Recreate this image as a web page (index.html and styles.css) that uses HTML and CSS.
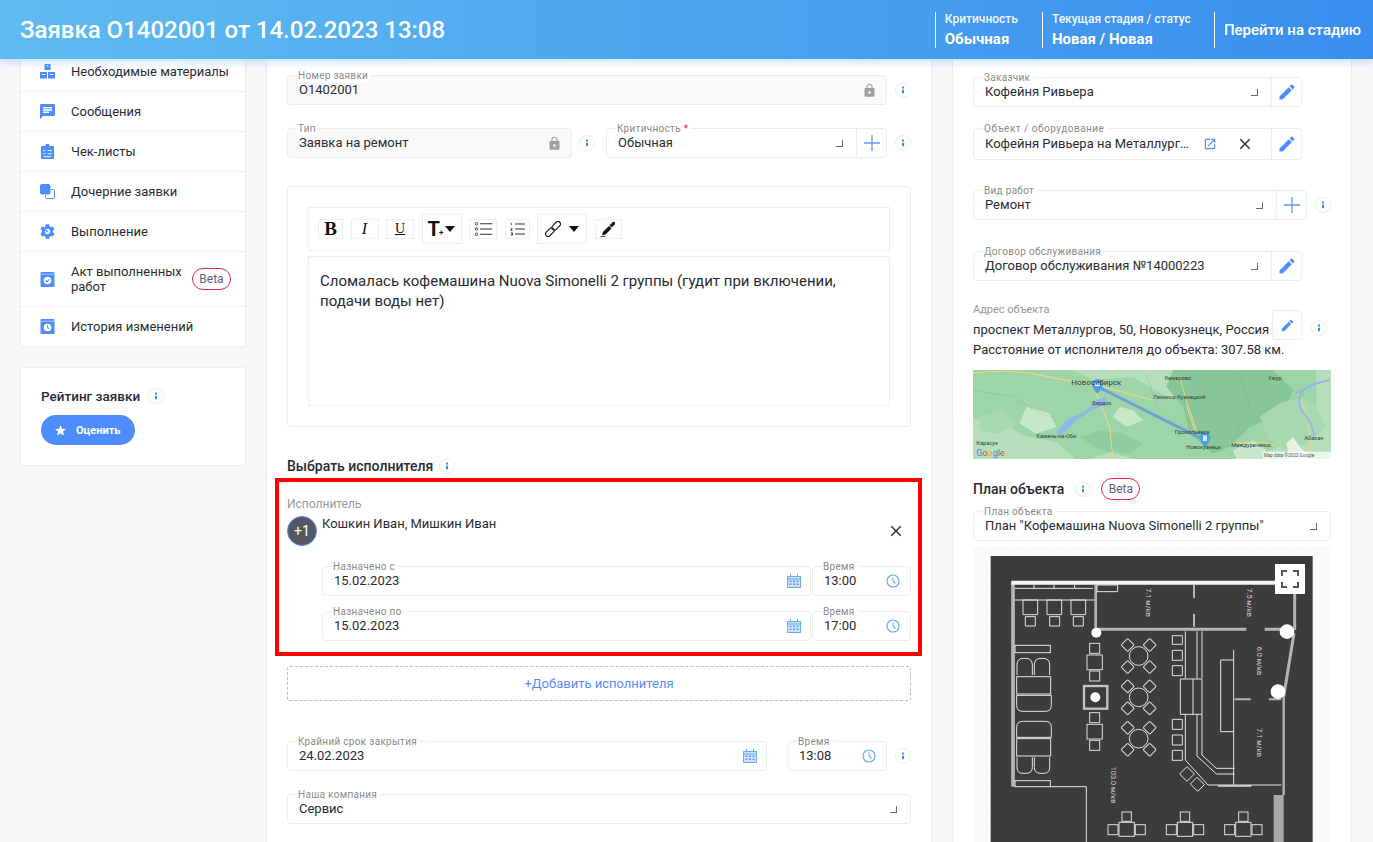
FILE: index.html
```html
<!DOCTYPE html>
<html lang="ru">
<head>
  <meta charset="UTF-8" />
  <title>Заявка О1402001</title>
  <link rel="stylesheet" href="styles.css">
</head>
<body>

  <svg class="sprite" xmlns="http://www.w3.org/2000/svg">
    <symbol id="i-info" viewBox="0 0 16 16"><circle cx="8" cy="8" r="7.5" fill="#fff" stroke="#ececec"/><rect x="7" y="4.6" width="2" height="2" fill="#3e8bf0"/><rect x="7" y="7.8" width="2" height="3.4" fill="#3e8bf0"/></symbol>
    <symbol id="i-lock" viewBox="0 0 24 24"><path d="M18 8h-1V6c0-2.76-2.24-5-5-5S7 3.24 7 6v2H6c-1.1 0-2 .9-2 2v10c0 1.1.9 2 2 2h12c1.1 0 2-.9 2-2V10c0-1.1-.9-2-2-2zm-6 9c-1.1 0-2-.9-2-2s.9-2 2-2 2 .9 2 2-.9 2-2 2zm3.100-9H8.900V6c0-1.710 1.390-3.100 3.100-3.100 1.710 0 3.100 1.390 3.100 3.100v2z"/></symbol>
    <symbol id="i-edit" viewBox="0 0 24 24"><path d="M3 17.250V21h3.750L17.810 9.940l-3.750-3.750L3 17.250zM20.710 7.040c.39-.39.39-1.020 0-1.410l-2.340-2.340c-.39-.39-1.020-.39-1.410 0l-1.830 1.830 3.750 3.750 1.830-1.830z"/></symbol>
    <symbol id="i-close" viewBox="0 0 24 24"><path d="M19 6.410L17.590 5 12 10.590 6.410 5 5 6.410 10.590 12 5 17.590 6.410 19 12 13.410 17.590 19 19 17.590 13.410 12z"/></symbol>
    <symbol id="i-open" viewBox="0 0 24 24"><path d="M19 19H5V5h7V3H5c-1.110 0-2 .9-2 2v14c0 1.100.89 2 2 2h14c1.100 0 2-.9 2-2v-7h-2v7zM14 3v2h3.590l-9.830 9.830 1.410 1.410L19 6.410V10h2V3h-7z"/></symbol>
    <symbol id="i-plus" viewBox="0 0 16 16"><path d="M8 0v16M0 8h16" fill="none" stroke="currentColor" stroke-width="1.300"/></symbol>
    <symbol id="i-cal" viewBox="0 0 14 14"><path d="M0 2h14v12H0z" fill="#cfe2fb" stroke="none"/><path d="M.5 2.500h13v11H.5zM.5 5h13M3.500 0v3M10.500 0v3" fill="none" stroke="#6aa9f5"/><path d="M2.500 6.500h2v1.500h-2zM6 6.500h2v1.500H6zM9.500 6.500h2v1.500h-2zM2.500 9.500h2V11h-2zM6 9.500h2V11H6zM9.500 9.500h2V11h-2z" fill="#5b9bee"/></symbol>
    <symbol id="i-clock" viewBox="0 0 14 14"><circle cx="7" cy="7" r="6" fill="none" stroke="#6aa9f5" stroke-width="1.200"/><path d="M7 3.500V7l2.500 2.500" fill="none" stroke="#6aa9f5" stroke-width="1.100"/></symbol>
    <symbol id="i-boxes" viewBox="0 0 15 15"><path d="M4.500 0h6v6h-6zM0 8h7v6.500H0zM8 8h7v6.500H8z"/><path d="M6.500 2h2M2 10.500h3M10 10.500h3" stroke="#fff"/></symbol>
    <symbol id="i-chat" viewBox="2 2 20 20"><path d="M20 2H4c-1.100 0-2 .9-2 2v18l4-4h14c1.100 0 2-.9 2-2V4c0-1.100-.9-2-2-2zM6 9h12v2H6V9zm8 5H6v-2h8v2zm4-6H6V6h12v2z"/></symbol>
    <symbol id="i-check" viewBox="0 0 14 16"><path d="M1 2h3.500l1-2h3l1 2H13a1 1 0 0 1 1 1v12a1 1 0 0 1-1 1H1a1 1 0 0 1-1-1V3a1 1 0 0 1 1-1z"/><path d="M2.500 6.500l1 1 1.500-1.500M7 7h4.500M2.500 10l1 1 1.500-1.500M7 10.500h4.500M3 13.500h8" fill="none" stroke="#fff"/></symbol>
    <symbol id="i-copy" viewBox="0 0 15 15"><rect width="10.500" height="10.500" rx="2"/><path d="M11.500 5.500h2a1 1 0 0 1 1 1v7a1 1 0 0 1-1 1h-7a1 1 0 0 1-1-1v-2" fill="none" stroke="currentColor"/></symbol>
    <symbol id="i-gear" viewBox="2 2 20 20"><path d="M19.140 12.940c.04-.3.06-.61.06-.94 0-.32-.02-.64-.07-.94l2.030-1.580c.18-.14.23-.41.12-.61l-1.920-3.320c-.12-.22-.37-.29-.59-.22l-2.390.96c-.5-.38-1.030-.7-1.620-.94l-.36-2.540c-.04-.24-.24-.41-.48-.41h-3.840c-.24 0-.43.17-.47.41l-.36 2.540c-.59.24-1.130.57-1.620.94l-2.390-.96c-.22-.08-.47 0-.59.22L2.740 8.870c-.12.21-.08.47.12.61l2.030 1.580c-.05.3-.09.63-.09.94s.02.64.07.94l-2.030 1.580c-.18.14-.23.41-.12.61l1.920 3.320c.12.22.37.29.59.22l2.390-.96c.5.38 1.030.7 1.620.94l.36 2.540c.05.24.24.41.48.41h3.840c.24 0 .44-.17.47-.41l.36-2.540c.59-.24 1.130-.56 1.620-.94l2.390.96c.22.08.47 0 .59-.22l1.920-3.320c.12-.22.07-.47-.12-.61l-2.010-1.580zM12 15.600c-1.980 0-3.600-1.620-3.600-3.600s1.620-3.600 3.600-3.600 3.600 1.620 3.600 3.600-1.620 3.600-3.600 3.600z"/><path d="M9.500 10l2.500 2.500" stroke="currentColor" stroke-width="2"/></symbol>
    <symbol id="i-act" viewBox="0 0 14 15"><path d="M1 0h12a1 1 0 0 1 1 1v13a1 1 0 0 1-1 1H1a1 1 0 0 1-1-1V1a1 1 0 0 1 1-1z"/><path d="M0 2.200h14" stroke="#fff" stroke-width=".5"/><circle cx="7" cy="8.500" r="3.800" fill="#fff"/><path d="M5.200 8.500l1.300 1.300 2.300-2.400" fill="none" stroke="currentColor" stroke-width="1.100"/></symbol>
    <symbol id="i-hist" viewBox="0 0 14 15"><path d="M1 0h12a1 1 0 0 1 1 1v13a1 1 0 0 1-1 1H1a1 1 0 0 1-1-1V1a1 1 0 0 1 1-1z"/><path d="M0 2.200h14" stroke="#fff" stroke-width=".5"/><circle cx="7" cy="8.500" r="3.800" fill="#fff"/><path d="M7 6.200v2.500l1.700 1" fill="none" stroke="currentColor"/></symbol>
    <symbol id="i-star" viewBox="2 2 20 20"><path d="M12 17.270L18.180 21l-1.640-7.030L22 9.240l-7.190-.61L12 2 9.190 8.630 2 9.240l5.460 4.730L5.820 21z"/></symbol>
    <symbol id="i-ul" viewBox="0 0 20 16"><circle cx="2" cy="2" r="1.500" fill="none" stroke="#333"/><circle cx="2" cy="8" r="1.500" fill="none" stroke="#333"/><circle cx="2" cy="14" r="1.500" fill="none" stroke="#333"/><path d="M6 2h14M6 8h14M6 14h14" stroke="#333" stroke-width="1.400"/></symbol>
    <symbol id="i-ol" viewBox="0 0 18 16"><path d="M1.500.5v3M1 7h1.500v1.500H1V10h2M1 12.500h2V14H1.500 3v1.500H1" fill="none" stroke="#333" stroke-width=".9"/><path d="M6 2h12M6 8h12M6 14h12" stroke="#333" stroke-width="1.400"/></symbol>
    <symbol id="i-link" viewBox="0 0 16 16"><g fill="none" stroke="#222" stroke-width="1.200" transform="rotate(-45 8 8)"><rect x="-1.500" y="5.500" width="10" height="5" rx="2.500"/><rect x="7.500" y="5.500" width="10" height="5" rx="2.500"/></g></symbol>
    <symbol id="i-pen" viewBox="0 0 16 16"><path d="M2 14.500L3 11l6-6 2.500 2.500-6 6z"/><path d="M9.500 4.500l2.800-3c.8-.8 1.800-.8 2.400-.2s.6 1.600-.2 2.400l-3 2.800z"/><path d="M.5 15.500h5" stroke="#222" stroke-width=".8"/></symbol>
  </svg>

  <header class="top-bar">
    <h1 class="top-title">Заявка О1402001 от 14.02.2023 13:08</h1>
    <div class="top-info">
      <div class="top-item top-crit">
        <span class="top-label">Критичность</span>
        <span class="top-value">Обычная</span>
      </div>
      <div class="top-item">
        <span class="top-label">Текущая стадия / статус</span>
        <span class="top-value">Новая / Новая</span>
      </div>
      <div class="top-item top-action">Перейти на стадию</div>
    </div>
  </header>

  <main class="page">

    <aside class="sidebar">
      <nav class="card side-nav">
        <a class="nav-row"><svg class="nav-icon"><use href="#i-boxes"/></svg>Необходимые материалы</a>
        <a class="nav-row"><svg class="nav-icon"><use href="#i-chat"/></svg>Сообщения</a>
        <a class="nav-row"><svg class="nav-icon"><use href="#i-check"/></svg>Чек-листы</a>
        <a class="nav-row"><svg class="nav-icon"><use href="#i-copy"/></svg>Дочерние заявки</a>
        <a class="nav-row"><svg class="nav-icon"><use href="#i-gear"/></svg>Выполнение</a>
        <a class="nav-row nav-row-tall"><svg class="nav-icon"><use href="#i-act"/></svg><span class="nav-text">Акт выполненных работ</span><span class="beta">Beta</span></a>
        <a class="nav-row"><svg class="nav-icon"><use href="#i-hist"/></svg>История изменений</a>
      </nav>

      <section class="card rating">
        <div class="heading rating-heading">Рейтинг заявки <svg class="info heading-info"><use href="#i-info"/></svg></div>
        <button class="rate-btn"><svg class="rate-star"><use href="#i-star"/></svg>Оценить</button>
      </section>
    </aside>

    <section class="card center">
      <div class="row">
        <div class="field locked grow">
          <label class="float">Номер заявки</label>
          <span class="value">О1402001</span>
          <svg class="lock"><use href="#i-lock"/></svg>
        </div>
        <svg class="info"><use href="#i-info"/></svg>
      </div>

      <div class="row row-type">
        <div class="field locked type-field">
          <label class="float">Тип</label>
          <span class="value">Заявка на ремонт</span>
          <svg class="lock"><use href="#i-lock"/></svg>
        </div>
        <svg class="info info-type"><use href="#i-info"/></svg>
        <div class="field grow">
          <label class="float">Критичность <em class="req">*</em></label>
          <span class="value">Обычная</span>
          <i class="corner"></i>
          <span class="addon"><svg class="plus"><use href="#i-plus"/></svg></span>
        </div>
        <svg class="info"><use href="#i-info"/></svg>
      </div>

      <div class="editor">
        <div class="toolbar">
          <span class="tool tool-b">B</span>
          <span class="tool tool-i">I</span>
          <span class="tool tool-u">U</span>
          <span class="tool tool-big tool-t">T<small class="t-mark">+</small><i class="caret"></i></span>
          <span class="tool tool-list"><svg class="tool-svg-ul"><use href="#i-ul"/></svg></span>
          <span class="tool tool-olist"><svg class="tool-svg-ol"><use href="#i-ol"/></svg></span>
          <span class="tool tool-big tool-link"><svg class="tool-svg"><use href="#i-link"/></svg><i class="caret caret-wide"></i></span>
          <span class="tool tool-pen"><svg class="tool-svg"><use href="#i-pen"/></svg></span>
        </div>
        <div class="editor-text">Сломалась кофемашина Nuova Simonelli 2 группы (гудит при включении, подачи воды нет)</div>
      </div>

      <div class="heading executor-heading">Выбрать исполнителя <svg class="info executor-info"><use href="#i-info"/></svg></div>

      <div class="executor">
        <div class="plain-label">Исполнитель</div>
        <div class="executor-person">
          <span class="avatar">+1</span>
          <span class="executor-name">Кошкин Иван, Мишкин Иван</span>
          <svg class="close close-exec"><use href="#i-close"/></svg>
        </div>
        <div class="date-row">
          <div class="field grow">
            <label class="float">Назначено с</label>
            <span class="value">15.02.2023</span>
            <svg class="cal"><use href="#i-cal"/></svg>
          </div>
          <div class="field time-field">
            <label class="float">Время</label>
            <span class="value">13:00</span>
            <svg class="clock"><use href="#i-clock"/></svg>
          </div>
        </div>
        <div class="date-row date-row-2">
          <div class="field grow">
            <label class="float">Назначено по</label>
            <span class="value">15.02.2023</span>
            <svg class="cal"><use href="#i-cal"/></svg>
          </div>
          <div class="field time-field">
            <label class="float">Время</label>
            <span class="value">17:00</span>
            <svg class="clock"><use href="#i-clock"/></svg>
          </div>
        </div>
      </div>

      <button class="add-executor">+Добавить исполнителя</button>

      <div class="row row-deadline">
        <div class="field deadline-field">
          <label class="float">Крайний срок закрытия</label>
          <span class="value">24.02.2023</span>
          <svg class="cal"><use href="#i-cal"/></svg>
        </div>
        <div class="field deadline-time">
          <label class="float">Время</label>
          <span class="value">13:08</span>
          <svg class="clock"><use href="#i-clock"/></svg>
        </div>
        <svg class="info"><use href="#i-info"/></svg>
      </div>

      <div class="field company-field">
        <label class="float">Наша компания</label>
        <span class="value">Сервис</span>
        <i class="corner"></i>
      </div>
    </section>

    <section class="card right">
      <div class="field side-field customer">
        <label class="float">Заказчик</label>
        <span class="value">Кофейня Ривьера</span>
        <i class="corner"></i>
        <span class="addon"><svg class="pencil"><use href="#i-edit"/></svg></span>
      </div>

      <div class="field side-field object-field">
        <label class="float">Объект / оборудование</label>
        <span class="value clip">Кофейня Ривьера на Металлург…</span>
        <svg class="open"><use href="#i-open"/></svg>
        <svg class="close close-object"><use href="#i-close"/></svg>
        <span class="addon"><svg class="pencil"><use href="#i-edit"/></svg></span>
      </div>

      <div class="row work-row">
        <div class="field work-field">
          <label class="float">Вид работ</label>
          <span class="value">Ремонт</span>
          <i class="corner"></i>
          <span class="addon"><svg class="plus"><use href="#i-plus"/></svg></span>
        </div>
        <svg class="info info-work"><use href="#i-info"/></svg>
      </div>

      <div class="field side-field contract">
        <label class="float">Договор обслуживания</label>
        <span class="value">Договор обслуживания №14000223</span>
        <i class="corner"></i>
        <span class="addon"><svg class="pencil"><use href="#i-edit"/></svg></span>
      </div>

      <div class="address">
        <div class="address-main">
          <div class="plain-label address-label">Адрес объекта</div>
          <div class="address-text">проспект Металлургов, 50, Новокузнецк, Россия</div>
        </div>
        <span class="pencil-box"><svg class="pencil-small"><use href="#i-edit"/></svg></span>
        <svg class="info info-address"><use href="#i-info"/></svg>
      </div>
      <div class="distance">Расстояние от исполнителя до объекта: 307.58 км.</div>

      <svg class="map" viewBox="40 420 1074 266" preserveAspectRatio="none">
        <rect x="40" y="420" width="1074" height="266" fill="#b4dfba"/>
        <path d="M40 420h300l60 30 120-10 100 60 90 20 110-20 40-80h210v120l-70 40-40 70-120 40-60 46H620l-60-40-110-30-90 30-70-60-100-20-60-40-90-10z" fill="#9dd5a9"/>
        <path d="M640 420h300l60 60-30 70-100 40-60 60-50 20-70-60-20-80-50-60z" fill="#86c699"/>
        <path d="M900 560l60-40 70-20 40 30 30 60-60 50-60 20-50-30zM60 560l70-20 40 40-50 30-60-10z" fill="#a6d9b0"/>
        <path d="M360 620l60-20 70 10 60 30-40 30-90-10z" fill="#8fcda0"/>
        <path d="M200 530l70 20 20 40-60 20-50-30zM820 660l60-30 40 30-20 26h-70zM480 530l40 10 30 30-50 20-40-30z" fill="#c8e8cb"/>
        <path d="M980 640l20-20 20 30 40 36h-70z" fill="#e8f1e4"/>
        <path d="M40 430q100-15 200 5t160 30M410 490l40 100 10 96M660 440l20 70 30 90M680 525l25 75M810 640l100-5 60 20M1015 490l30 70 10 126M430 470l150 40" fill="none" stroke="#f0d684" stroke-width="3"/>
        <path d="M290 610l30-40 60-30 30-30 25-10 10 20-50 20-50 35-40 40z" fill="#8fb7ea"/>
        <path d="M1110 450q-50 10-80 30-20 30-5 60 30 30 40 80M1030 480l-20 10" fill="none" stroke="#8fb7ea" stroke-width="6"/>
        <path d="M40 480l120 20 80 50 40 10M560 430l30 100 40 40 90 40M840 430l30 90-50 110" fill="none" stroke="#7f9a88" stroke-width="1.500" stroke-dasharray="3 3"/>
        <path d="M415 470L735 630" stroke="#6d9fd9" stroke-width="9"/>
        <path d="M413 447a16 16 0 0 1 16 16c0 11-16 27-16 27s-16-16-16-27a16 16 0 0 1 16-16z" fill="#4c9fe8"/>
        <path d="M736 606a16 16 0 0 1 16 16c0 11-16 30-16 30s-16-19-16-30a16 16 0 0 1 16-16z" fill="#4c9fe8"/>
        <rect x="406" y="458" width="14" height="10" fill="#fff"/>
        <rect x="730" y="616" width="12" height="16" fill="#d8ecfb"/>
        <g class="map-labels">
          <text x="335" y="464" class="map-big">Новосибирск</text>
          <text x="615" y="450">Кемерово</text>
          <text x="580" y="506">Ленинск-Кузнецкий</text>
          <text x="398" y="525">Бердск</text>
          <text x="230" y="624">Камень-на-Оби</text>
          <text x="645" y="610">Прокопьевск</text>
          <text x="680" y="656">Новокузнецк</text>
          <text x="815" y="650">Междуреченск</text>
          <text x="925" y="450">Ужур</text>
          <text x="1034" y="630">Абакан</text>
          <text x="50" y="644">Карасук</text>
        </g>
        <text x="50" y="676" class="google"><tspan fill="#4285f4">G</tspan><tspan fill="#ea4335">o</tspan><tspan fill="#fbbc05">o</tspan><tspan fill="#4285f4">g</tspan><tspan fill="#34a853">l</tspan><tspan fill="#ea4335">e</tspan></text>
        <rect x="908" y="664" width="206" height="22" fill="#fff" fill-opacity=".7"/>
        <text x="912" y="680" class="map-credit">Map data ©2023 Google</text>
      </svg>

      <div class="plan-heading">
        <span class="heading">План объекта</span>
        <svg class="info plan-info"><use href="#i-info"/></svg>
        <span class="beta">Beta</span>
      </div>

      <div class="field plan-field">
        <label class="float">План объекта</label>
        <span class="value">План "Кофемашина Nuova Simonelli 2 группы"</span>
        <i class="corner"></i>
      </div>

      <div class="plan">
        <svg class="plan-svg" viewBox="40 228 1074 888">
          <defs>
            <g id="round-table" fill="none" stroke="#ddd" stroke-width="3">
              <circle r="28"/>
              <rect x="-47" y="-47" width="28" height="28" rx="3" transform="rotate(45 -33 -33)"/>
              <rect x="19" y="-47" width="28" height="28" rx="3" transform="rotate(45 33 -33)"/>
              <rect x="-47" y="19" width="28" height="28" rx="3" transform="rotate(45 -33 33)"/>
              <rect x="19" y="19" width="28" height="28" rx="3" transform="rotate(45 33 33)"/>
            </g>
            <g id="square-table" fill="none" stroke="#ddd" stroke-width="3">
              <rect x="-23" y="-21" width="46" height="42"/>
              <rect x="-56" y="-14" width="30" height="30"/>
              <rect x="26" y="-14" width="30" height="30"/>
              <rect x="-14" y="-52" width="28" height="28"/>
            </g>
            <g id="two-table" fill="none" stroke="#ddd" stroke-width="3">
              <rect x="-23" y="-22" width="46" height="44"/>
              <rect x="-15" y="-57" width="30" height="30"/>
              <rect x="-15" y="26" width="30" height="30"/>
            </g>
            <pattern id="plan-grid" width="60" height="60" patternUnits="userSpaceOnUse">
              <path d="M60 0H0V60" fill="none" stroke="#ececec" stroke-width="2" stroke-dasharray="3 3"/>
            </pattern>
          </defs>
          <rect x="40" y="228" width="1074" height="888" fill="#fafafa"/>
          <rect x="40" y="228" width="1074" height="888" fill="url(#plan-grid)"/>
          <rect x="93" y="258" width="966" height="858" fill="#3c3c3c"/>

          <g fill="none" stroke="#b5b5b5">
            <path d="M160 338V950" stroke-width="11"/>
            <path d="M408 345V480" stroke-width="8"/>
            <path d="M408 478H860M915 478H965" stroke-width="9"/>
            <path d="M703 345V385M703 432V470" stroke-width="6"/>
            <path d="M1005 372V480" stroke-width="9"/>
            <path d="M1003 490L972 680" stroke-width="9"/>
            <path d="M972 680V975" stroke-width="7"/>
            <path d="M825 688H873M928 688H965" stroke-width="6"/>
            <path d="M775 948H875" stroke-width="6"/>
          </g>
          <path d="M155 338H950" stroke="#f5f5f5" stroke-width="12"/>
          <rect x="942" y="975" width="30" height="141" fill="#a9a9a9"/>
          <rect x="373" y="648" width="70" height="68" fill="none" stroke="#c4c4c4" stroke-width="7"/>

          <g fill="none" stroke="#e4e4e4" stroke-width="3">
            <path d="M165 355H400M223 345V355M283 345V355M345 345V355M165 390H405M412 345H474V365H412z"/>
            <path d="M190 390h44v44h-44zM262 390h44v44h-44zM334 390h44v44h-44z"/>
            <path d="M197 440h30v28h-30zM270 440h30v28h-30zM341 440h30v28h-30z"/>
            <rect x="166" y="526" width="106" height="22"/>
            <path d="M172 615v-30q0-20 20-20h6q20 0 20 20v30M224 615v-30q0-20 20-20h6q20 0 20 20v30"/>
            <rect x="171" y="620" width="102" height="52"/>
            <path d="M171 676h104v30q0 18-18 18H189q-18 0-18-18z"/>
            <path d="M171 802v-30q0-18 18-18h68q18 0 18 18v30z"/>
            <rect x="171" y="806" width="102" height="52"/>
            <path d="M172 862v30q0 18 18 18h10q18 0 18-18v-30M224 862v30q0 18 18 18h10q18 0 18-18v-30"/>
            <rect x="166" y="932" width="106" height="18"/>
            <path d="M272 950H380V1116"/>
            <path d="M638 497h30v26h-30zM638 541h30v30h-30zM638 587h30v30h-30zM638 748h30v30h-30zM638 795h30v30h-30zM638 841h30v30h-30z"/>
            <path d="M677 484V625M712 484V625M727 484V625M662 627h65v106h-65zM700 627v106"/>
            <path d="M677 733V870L745 945H965M712 733V858L770 912H825M727 733V855L770 895H825"/>
            <path d="M822 540V945M783 570H822M783 570V785H822"/>
            <path d="M660 912l22-22 22 22-22 22zM692 942l20-20 22 22-20 20z"/>
          </g>
          <use href="#round-table" x="537" y="558"/>
          <use href="#round-table" x="537" y="682"/>
          <use href="#round-table" x="537" y="806"/>
          <use href="#two-table" x="405" y="577"/>
          <use href="#two-table" x="405" y="785"/>
          <use href="#square-table" x="501" y="1078"/>
          <use href="#square-table" x="676" y="1078"/>
          <use href="#square-table" x="851" y="1078"/>
          <g fill="#fff">
            <circle cx="410" cy="488" r="15"/>
            <circle cx="982" cy="485" r="22"/>
            <circle cx="955" cy="665" r="22"/>
            <circle cx="407" cy="682" r="15"/>
          </g>
          <g class="plan-labels">
            <text transform="translate(558 355) rotate(90)">7.1 м/кв</text>
            <text transform="translate(862 355) rotate(90)">7.5 м/кв</text>
            <text transform="translate(893 530) rotate(90)">6.0 м/кв</text>
            <text transform="translate(893 775) rotate(90)">7.1 м/кв</text>
            <text transform="translate(455 890) rotate(90)">103.0 м/кв</text>
          </g>
        </svg>
        <button class="fullscreen">
          <svg class="fullscreen-icon" viewBox="0 0 18 18"><path d="M1 6V1h5M12 1h5v5M17 12v5h-5M6 17H1v-5" fill="none" stroke="#555" stroke-width="2"/></svg>
        </button>
      </div>
    </section>

  </main>

</body>
</html>
```

FILE: styles.css
```css
* {
  box-sizing: border-box;
  margin: 0;
  padding: 0;
}
html, body {
  height: 100%;
  overflow: hidden;
}
body {
  background: #f7f7f7;
  color: #2b2b33;
  font-family: Roboto, "Liberation Sans", sans-serif;
  font-size: 13px;
}
.sprite {
  display: none;
}
svg {
  flex: none;
  fill: currentColor;
}

/* top bar */
.top-bar {
  position: relative;
  z-index: 2;
  display: flex;
  align-items: center;
  justify-content: space-between;
  height: 59px;
  padding-left: 20px;
  color: #fff;
  background: linear-gradient(90deg, #5fbbf1, #3a8eee);
  box-shadow: 0 3px 8px rgba(90, 170, 240, .35);
}
.top-title {
  font-size: 24px;
  font-weight: 500;
}
.top-info {
  display: flex;
}
.top-item {
  display: flex;
  flex-direction: column;
  justify-content: space-between;
  height: 36px;
  padding: 0 23px 0 9px;
  border-left: 1px solid #fff;
}
.top-crit {
  padding-right: 24px;
}
.top-label {
  font-size: 12px;
  font-weight: 500;
  opacity: .92;
}
.top-value {
  font-size: 15px;
  font-weight: 700;
}
.top-action {
  justify-content: center;
  padding-right: 12px;
  font-size: 15px;
  font-weight: 500;
}

/* columns */
.page {
  display: flex;
  gap: 20px;
  padding: 0 20px;
}
.card {
  background: #fff;
  border: 1px solid #eee;
}
.sidebar {
  display: flex;
  flex-direction: column;
  gap: 20px;
  width: 226px;
  margin-top: -8px;
}
.center {
  width: 666px;
  height: 800px;
  padding: 16px 20px 0;
  border-top: 0;
}
.right {
  width: 400px;
  height: 800px;
  padding: 18px 20px 0;
  border-top: 0;
}

/* side nav */
.nav-row {
  display: flex;
  align-items: center;
  height: 40px;
  padding-left: 19px;
  border-bottom: 1px solid #eee;
}
.nav-row:last-child {
  border-bottom: 0;
}
.nav-row-tall {
  height: 55px;
}
.nav-row-tall + .nav-row {
  height: 39px;
}
.nav-text {
  width: 121px;
  line-height: 15px;
}
.nav-icon {
  width: 15px;
  height: 15px;
  margin-right: 16px;
  color: #4d8dfd;
  fill: #4d8dfd;
}
.beta {
  display: inline-flex;
  align-items: center;
  justify-content: center;
  width: 39px;
  height: 22px;
  border: 1px solid #e8264f;
  border-radius: 11px;
  color: #5f6470;
  font-size: 12px;
}

/* rating */
.rating {
  height: 99px;
  padding: 20px 20px 0;
  border-radius: 2px;
}
.heading {
  display: flex;
  align-items: center;
  font-size: 14px;
  font-weight: 500;
}
.rating-heading {
  font-size: 13.5px;
}
.heading-info {
  margin-left: 10px;
}
.rate-btn {
  display: flex;
  align-items: center;
  width: 94px;
  height: 30px;
  margin-top: 11px;
  padding-left: 14px;
  border: 0;
  border-radius: 15px;
  color: #fff;
  background: #4d8dfd;
  font: 700 11px Roboto, "Liberation Sans", sans-serif;
}
.rate-star {
  width: 11px;
  height: 11px;
  margin-right: 10px;
}

/* form fields */
.row {
  display: flex;
  align-items: center;
}
.grow {
  flex: 1;
}
.field {
  position: relative;
  display: flex;
  align-items: center;
  height: 30px;
  padding-left: 11px;
  border: 1px solid #ececec;
  border-radius: 4px;
  background: #fff;
}
.locked {
  background: #f9f9f9;
}
.float {
  position: absolute;
  top: -6px;
  left: 9px;
  padding: 0 3px 0 1px;
  color: #8a8a8a;
  background: #fff;
  font-size: 10px;
  line-height: 12px;
  letter-spacing: .3px;
}
.req {
  color: #e8264f;
  font-style: normal;
}
.value {
  flex: 1;
  padding-bottom: 2px;
  white-space: nowrap;
}
.info {
  width: 16px;
  height: 16px;
  margin-left: 8px;
}
.lock {
  width: 15px;
  height: 15px;
  margin-right: 9px;
  fill: #a0a0a0;
}
.corner {
  width: 7px;
  height: 7px;
  margin-right: 13px;
  border-right: 1px solid #666;
  border-bottom: 1px solid #666;
}
.addon {
  display: flex;
  align-items: center;
  justify-content: center;
  width: 30px;
  height: 100%;
  border-left: 1px solid #ececec;
}
.plus {
  width: 16px;
  height: 16px;
  color: #5b9bf8;
}
.cal {
  width: 14px;
  height: 14px;
  margin-right: 9px;
}
.clock {
  width: 14px;
  height: 14px;
  margin-right: 10px;
}
.row-type {
  margin-top: 23px;
}
.type-field {
  width: 285px;
}
.info-type {
  margin: 0 11px 0 7px;
}

/* editor */
.editor {
  height: 241px;
  margin-top: 28px;
  padding: 20px;
  border: 1px solid #ececec;
  border-radius: 3px;
}
.toolbar {
  display: flex;
  align-items: center;
  gap: 7.5px;
  height: 44px;
  padding-left: 9px;
  border: 1px solid #eee;
}
.tool {
  display: flex;
  align-items: center;
  justify-content: center;
  width: 28px;
  height: 20px;
  border: 1px solid #eee;
  color: #111;
  font-family: "Liberation Serif", serif;
}
.tool-b {
  width: 25px;
  font-size: 19px;
  font-weight: 700;
}
.tool-i {
  font-size: 16px;
  font-style: italic;
}
.tool-u {
  font-size: 14px;
  text-decoration: underline;
}
.tool-big {
  height: 30px;
}
.tool-t {
  width: 40px;
  font-family: Roboto, "Liberation Sans", sans-serif;
  font-size: 20px;
  font-weight: 700;
}
.t-mark {
  margin: 6px 2px 0 -1px;
  font-size: 8px;
}
.tool-olist {
  width: 25px;
}
.tool-link {
  width: 50px;
}
.tool-pen {
  width: 27px;
}
.tool-svg {
  width: 16px;
  height: 16px;
}
.tool-svg-ul {
  width: 19px;
  height: 14px;
}
.tool-svg-ol {
  width: 15px;
  height: 14px;
}
.caret {
  width: 0;
  height: 0;
  border-top: 6px solid #111;
  border-right: 5px solid transparent;
  border-left: 5px solid transparent;
}
.caret-wide {
  margin-left: 8px;
}
.editor-text {
  height: 150px;
  margin-top: 5px;
  padding: 14px 11px;
  border: 1px solid #eee;
  font-size: 15px;
  line-height: 20px;
}

/* executor */
.executor-heading {
  height: 18px;
  margin-top: 30px;
}
.executor-info {
  margin-left: 6px;
}
.executor {
  height: 178px;
  margin: 3px -11px 0 -12px;
  padding: 15px 7px 0 8px;
  border: 4px solid #f00;
}
.plain-label {
  color: #999;
  font-size: 12px;
  line-height: 14px;
}
.executor-person {
  display: flex;
  height: 30px;
  margin-top: 5px;
}
.avatar {
  display: flex;
  align-items: center;
  justify-content: center;
  width: 30px;
  height: 30px;
  border: 1px solid #4d8dfd;
  border-radius: 50%;
  color: #fff;
  background: #555860;
  font-size: 14px;
}
.executor-name {
  flex: 1;
  margin: 0 0 0 5px;
  line-height: 15px;
}
.close {
  fill: #333;
}
.close-exec {
  width: 18px;
  height: 18px;
  margin: 6px 6px 0 0;
}
.date-row {
  display: flex;
  gap: 1px;
  margin: 20px 0 0 35px;
}
.date-row-2 {
  margin-top: 15px;
}
.time-field {
  width: 99px;
}

.add-executor {
  display: block;
  width: 100%;
  height: 35px;
  margin-top: 10px;
  border: 1px dashed #bbb;
  border-radius: 3px;
  color: #5c8bf5;
  background: #fff;
  font: 13px Roboto, "Liberation Sans", sans-serif;
}
.row-deadline {
  margin-top: 40px;
}
.deadline-field {
  width: 480px;
}
.deadline-time {
  width: 100px;
  margin-left: 20px;
}
.company-field {
  margin-top: 23px;
}

/* right column */
.side-field {
  width: 329px;
}
.customer {
  height: 30px;
}
.object-field {
  height: 32px;
  margin-top: 21px;
}
.object-field .float {
  letter-spacing: .5px;
}
.clip {
  flex: none;
  width: 206px;
}
.open {
  width: 14px;
  height: 14px;
  margin-left: 12px;
  fill: #4d8dfd;
}
.close-object {
  width: 18px;
  height: 18px;
  margin: 0 17px 0 19px;
}
.pencil {
  width: 20px;
  height: 20px;
  fill: #4d8dfd;
}
.pencil-small {
  width: 15px;
  height: 15px;
  fill: #4d8dfd;
}
.work-row {
  margin-top: 30px;
}
.work-field {
  width: 334px;
}
.info-work {
  margin-left: 8px;
}
.contract {
  margin-top: 31px;
}
.address {
  display: flex;
  align-items: flex-start;
  margin-top: 22px;
}
.address-main {
  width: 299px;
}
.address-label {
  font-size: 11px;
}
.address-text {
  height: 20px;
  margin-top: 3px;
  line-height: 20px;
  white-space: nowrap;
}
.pencil-box {
  display: flex;
  align-items: center;
  justify-content: center;
  width: 30px;
  height: 30px;
  margin-top: 7px;
  border: 1px solid #ececec;
  border-radius: 3px;
}
.info-address {
  margin: 17px 0 0 9px;
}
.distance {
  height: 20px;
  line-height: 20px;
}
.map {
  display: block;
  width: 358px;
  height: 89px;
  margin-top: 10px;
}
.map-labels {
  fill: #33423a;
  font-size: 17px;
}
.map-big {
  font-size: 24px;
}
.google {
  font-size: 27px;
}
.map-credit {
  fill: #555;
  font-size: 14px;
}
.plan-heading {
  display: flex;
  align-items: center;
  height: 22px;
  margin-top: 19px;
}
.plan-info {
  margin: 0 10px 0 11px;
}
.plan-field {
  margin-top: 11px;
}
.plan {
  position: relative;
  margin-top: 5px;
  height: 296px;
  overflow: hidden;
}
.plan-svg {
  display: block;
  width: 358px;
  height: 296px;
}
.plan-labels {
  fill: #ccc;
  font-size: 22px;
}
.fullscreen {
  position: absolute;
  top: 18px;
  left: 302px;
  display: flex;
  align-items: center;
  justify-content: center;
  width: 30px;
  height: 30px;
  border: 0;
  background: #fff;
}
.fullscreen-icon {
  width: 18px;
  height: 18px;
}
```
